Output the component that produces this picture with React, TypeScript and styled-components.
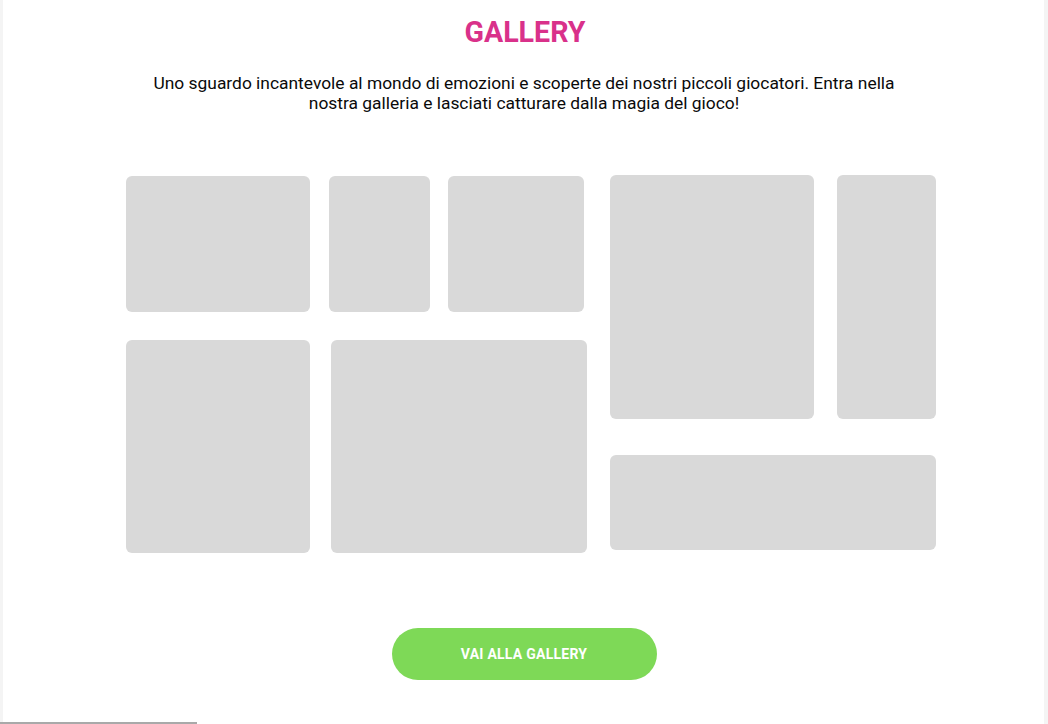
import React from "react";
import styled, { createGlobalStyle } from "styled-components";

const Global = createGlobalStyle`
  html, body { margin: 0; padding: 0; background: #f4f4f4; }
  body { font-family: Roboto, "Liberation Sans", sans-serif; }
`;

const Page = styled.div`
  margin: 0 4px 0 3px;
  min-height: 724px;
  background: #ffffff;
  display: flex;
  flex-direction: column;
  align-items: center;
  box-sizing: border-box;
  padding-top: 15px;
`;

const Title = styled.h1`
  margin: 0 0 0 3px;
  font-size: 28.6px;
  line-height: 34px;
  font-weight: 700;
  color: #d9318a;
  letter-spacing: 0;
`;

const Intro = styled.p`
  margin: 24px 0 0 1px;
  width: 770px;
  text-align: center;
  font-size: 17.4px;
  line-height: 20px;
  color: #0a0a0a;
`;

const Grid = styled.div`
  margin-top: 62px;
  display: flex;
  gap: 23px;
  width: 810px;
  margin-left: 14px;
`;

const Column = styled.div<{ $gap: number; $w: number; $top?: number }>`
  display: flex;
  flex-direction: column;
  gap: ${(p) => p.$gap}px;
  width: ${(p) => p.$w}px;
  margin-top: ${(p) => p.$top ?? 0}px;
`;

const Row = styled.div<{ $gap: number }>`
  display: flex;
  gap: ${(p) => p.$gap}px;
`;

const Tile = styled.div<{ $w: number; $h: number; $ml?: number }>`
  width: ${(p) => p.$w}px;
  height: ${(p) => p.$h}px;
  margin-left: ${(p) => p.$ml ?? 0}px;
  background: #d9d9d9;
  border-radius: 6px;
  flex-shrink: 0;
`;

const Button = styled.button`
  margin-top: 75px;
  width: 265px;
  height: 52px;
  border: none;
  border-radius: 26px;
  background: #7ed957;
  color: #fff;
  font-family: Roboto, "Liberation Sans", sans-serif;
  font-weight: 700;
  font-size: 14px;
  letter-spacing: 0.25px;
  cursor: pointer;
  margin-left: 1px;
`;

const ScrollThumb = styled.div`
  position: fixed;
  left: 0;
  bottom: 0;
  width: 197px;
  height: 2px;
  background: #a9a9a9;
`;

export default function App() {
  return (
    <>
      <Global />
      <Page>
        <Title>GALLERY</Title>
        <Intro>
          Uno sguardo incantevole al mondo di emozioni e scoperte dei nostri piccoli giocatori. Entra nella
          <br />
          nostra galleria e lasciati catturare dalla magia del gioco!
        </Intro>
        <Grid>
          <Column $gap={28} $w={461} $top={1}>
            <Row $gap={0}>
              <Tile $w={184} $h={136} />
              <Tile $w={101} $h={136} $ml={19} />
              <Tile $w={136} $h={136} $ml={18} />
            </Row>
            <Row $gap={21}>
              <Tile $w={184} $h={213} />
              <Tile $w={256} $h={213} />
            </Row>
          </Column>
          <Column $gap={36} $w={326}>
            <Row $gap={23}>
              <Tile $w={204} $h={244} />
              <Tile $w={99} $h={244} />
            </Row>
            <Tile $w={326} $h={95} />
          </Column>
        </Grid>
        <Button>VAI ALLA GALLERY</Button>
      </Page>
      <ScrollThumb />
    </>
  );
}
